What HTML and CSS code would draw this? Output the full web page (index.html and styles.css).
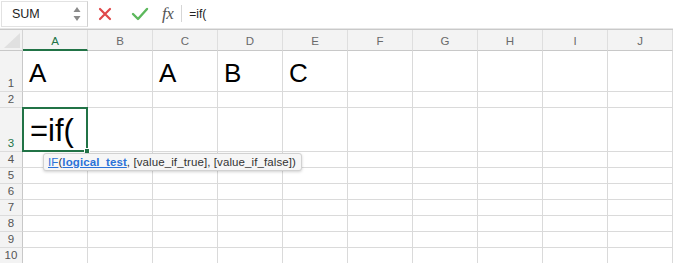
FILE: index.html
```html
<!DOCTYPE html>
<html>
<head>
<meta charset="utf-8">
<link rel="stylesheet" href="styles.css">
</head>
<body>
<div class="app">
  <div class="toolbar">
    <div class="namebox">
      <span class="name">SUM</span>
      <span class="spin">
        <svg width="8" height="16" viewBox="0 0 8 16"><path d="M4 1 L7.5 6 H0.5 Z" fill="#8a8a8a"/><path d="M4 15 L7.5 10 H0.5 Z" fill="#8a8a8a"/></svg>
      </span>
    </div>
    <div class="fbar">
      <span class="ico cancel">
        <svg width="14" height="14" viewBox="0 0 14 14"><path d="M2 2 L12 12 M12 2 L2 12" stroke="#e0484a" stroke-width="2.2" stroke-linecap="round"/></svg>
      </span>
      <span class="ico ok">
        <svg width="18" height="14" viewBox="0 0 18 14"><path d="M2 7 L7 12 L16 2" stroke="#5cb85c" stroke-width="2.4" fill="none" stroke-linecap="round" stroke-linejoin="round"/></svg>
      </span>
      <span class="fx">fx</span>
      <span class="sep"></span>
      <span class="ftext">=if(</span>
    </div>
  </div>
  <div class="sheet">
    <div class="corner"><svg width="16" height="15" viewBox="0 0 16 15"><path d="M16 0 V15 H0 Z" fill="#e0e0e0"/></svg></div>
    <div class="ch sel">A</div><div class="ch">B</div><div class="ch">C</div><div class="ch">D</div><div class="ch">E</div><div class="ch">F</div><div class="ch">G</div><div class="ch">H</div><div class="ch">I</div><div class="ch">J</div>

    <div class="rh">1</div>
    <div class="c big">A</div><div class="c"></div><div class="c big">A</div><div class="c big">B</div><div class="c big">C</div><div class="c"></div><div class="c"></div><div class="c"></div><div class="c"></div><div class="c"></div>

    <div class="rh">2</div>
    <div class="c"></div><div class="c"></div><div class="c"></div><div class="c"></div><div class="c"></div><div class="c"></div><div class="c"></div><div class="c"></div><div class="c"></div><div class="c"></div>

    <div class="rh selr">3</div>
    <div class="c edit"><span class="etext">=if(</span><span class="handle"></span></div><div class="c"></div><div class="c"></div><div class="c"></div><div class="c"></div><div class="c"></div><div class="c"></div><div class="c"></div><div class="c"></div><div class="c"></div>

    <div class="rh">4</div>
    <div class="c"></div><div class="c"></div><div class="c"></div><div class="c"></div><div class="c"></div><div class="c"></div><div class="c"></div><div class="c"></div><div class="c"></div><div class="c"></div>
    <div class="rh">5</div>
    <div class="c"></div><div class="c"></div><div class="c"></div><div class="c"></div><div class="c"></div><div class="c"></div><div class="c"></div><div class="c"></div><div class="c"></div><div class="c"></div>
    <div class="rh">6</div>
    <div class="c"></div><div class="c"></div><div class="c"></div><div class="c"></div><div class="c"></div><div class="c"></div><div class="c"></div><div class="c"></div><div class="c"></div><div class="c"></div>
    <div class="rh">7</div>
    <div class="c"></div><div class="c"></div><div class="c"></div><div class="c"></div><div class="c"></div><div class="c"></div><div class="c"></div><div class="c"></div><div class="c"></div><div class="c"></div>
    <div class="rh">8</div>
    <div class="c"></div><div class="c"></div><div class="c"></div><div class="c"></div><div class="c"></div><div class="c"></div><div class="c"></div><div class="c"></div><div class="c"></div><div class="c"></div>
    <div class="rh">9</div>
    <div class="c"></div><div class="c"></div><div class="c"></div><div class="c"></div><div class="c"></div><div class="c"></div><div class="c"></div><div class="c"></div><div class="c"></div><div class="c"></div>
    <div class="rh">10</div>
    <div class="c"></div><div class="c"></div><div class="c"></div><div class="c"></div><div class="c"></div><div class="c"></div><div class="c"></div><div class="c"></div><div class="c"></div><div class="c"></div>

    <div class="tip"><a class="fn">IF</a>(<a class="arg">logical_test</a>, [value_if_true], [value_if_false])</div>
  </div>
</div>
</body>
</html>
```

FILE: styles.css
```css
* { box-sizing: border-box; }
html, body { margin: 0; padding: 0; background: #fff; }
body { font-family: "Liberation Sans", Arial, sans-serif; width: 673px; height: 263px; overflow: hidden; }

.toolbar {
  display: flex;
  height: 30px;
  background: #fff;
  border-bottom: 1px solid #c9c9c9;
  box-shadow: inset 0 -3px 0 -2px #e6e6e6;
}
.namebox {
  display: flex;
  align-items: center;
  justify-content: space-between;
  width: 87px;
  height: 26px;
  margin: 1px 0 0 1px;
  padding: 0 6px 0 10px;
  border: 1px solid #e2e2e2;
  border-right: 1px solid #d0d0d0;
}
.name { font-size: 12.5px; color: #222; }
.spin { display: flex; }
.fbar { display: flex; align-items: center; flex: 1; height: 27px; }
.ico { display: flex; }
.cancel { margin-left: 10px; }
.ok { margin-left: 19px; }
.fx {
  margin-left: 13px;
  font-family: "Liberation Serif", "DejaVu Serif", serif;
  font-style: italic;
  font-size: 17px;
  color: #555;
  letter-spacing: -0.5px;
}
.sep { width: 1px; height: 17px; background: #d6d6d6; margin-left: 8px; }
.ftext { margin-left: 7px; font-size: 12px; color: #222; }

.sheet {
  position: relative;
  display: grid;
  grid-template-columns: 23px repeat(10, 65px);
  grid-template-rows: 21px 41px 16px 44px repeat(7, 16px);
}
.corner {
  background: #f2f2f2;
  border-right: 1px solid #d4d4d4;
  border-bottom: 1px solid #c8c8c8;
  display: flex;
  align-items: flex-end;
  justify-content: flex-end;
  padding: 0 2px 2px 0;
}
.ch {
  background: #f3f3f3;
  border-right: 1px solid #dedede;
  border-bottom: 1px solid #c8c8c8;
  font-size: 11.5px;
  color: #6a6a6a;
  display: flex;
  align-items: center;
  justify-content: center;
  padding-top: 1px;
}
.ch.sel { color: #217346; border-bottom: 2px solid #217346; padding-top: 2px; }
.rh {
  background: #f3f3f3;
  border-right: 1px solid #c8c8c8;
  border-bottom: 1px solid #dcdcdc;
  font-size: 11.5px;
  color: #555;
  display: flex;
  align-items: flex-end;
  justify-content: center;
  padding-bottom: 1px;
  line-height: 14px;
}
.rh.selr { color: #217346; }
.c {
  border-right: 1px solid #dadada;
  border-bottom: 1px solid #dadada;
}
.big {
  font-size: 26px;
  color: #000;
  display: flex;
  align-items: flex-end;
  padding: 0 0 4px 6px;
  line-height: 28px;
}
.edit {
  position: relative;
  border: 2px solid #217346;
  margin: -1px 0 0 -1px;
  display: flex;
  align-items: flex-end;
  padding: 0 0 2px 6px;
}
.etext { font-size: 31px; line-height: 34px; color: #000; }
.handle {
  position: absolute;
  right: -4px;
  bottom: -4px;
  width: 6px;
  height: 6px;
  background: #217346;
  border: 1px solid #fff;
}
.tip {
  position: absolute;
  left: 43px;
  top: 123px;
  height: 18px;
  padding: 0 5px 0 4px;
  background: #f6f6f6;
  border: 1px solid #d2d2d2;
  border-radius: 3px;
  box-shadow: 0 1px 3px rgba(0,0,0,0.18);
  font-size: 11.5px;
  letter-spacing: 0.1px;
  line-height: 16px;
  color: #333;
  white-space: nowrap;
}
.tip a { color: #2a72d8; text-decoration: underline; }
.tip .arg { font-weight: bold; }
```
